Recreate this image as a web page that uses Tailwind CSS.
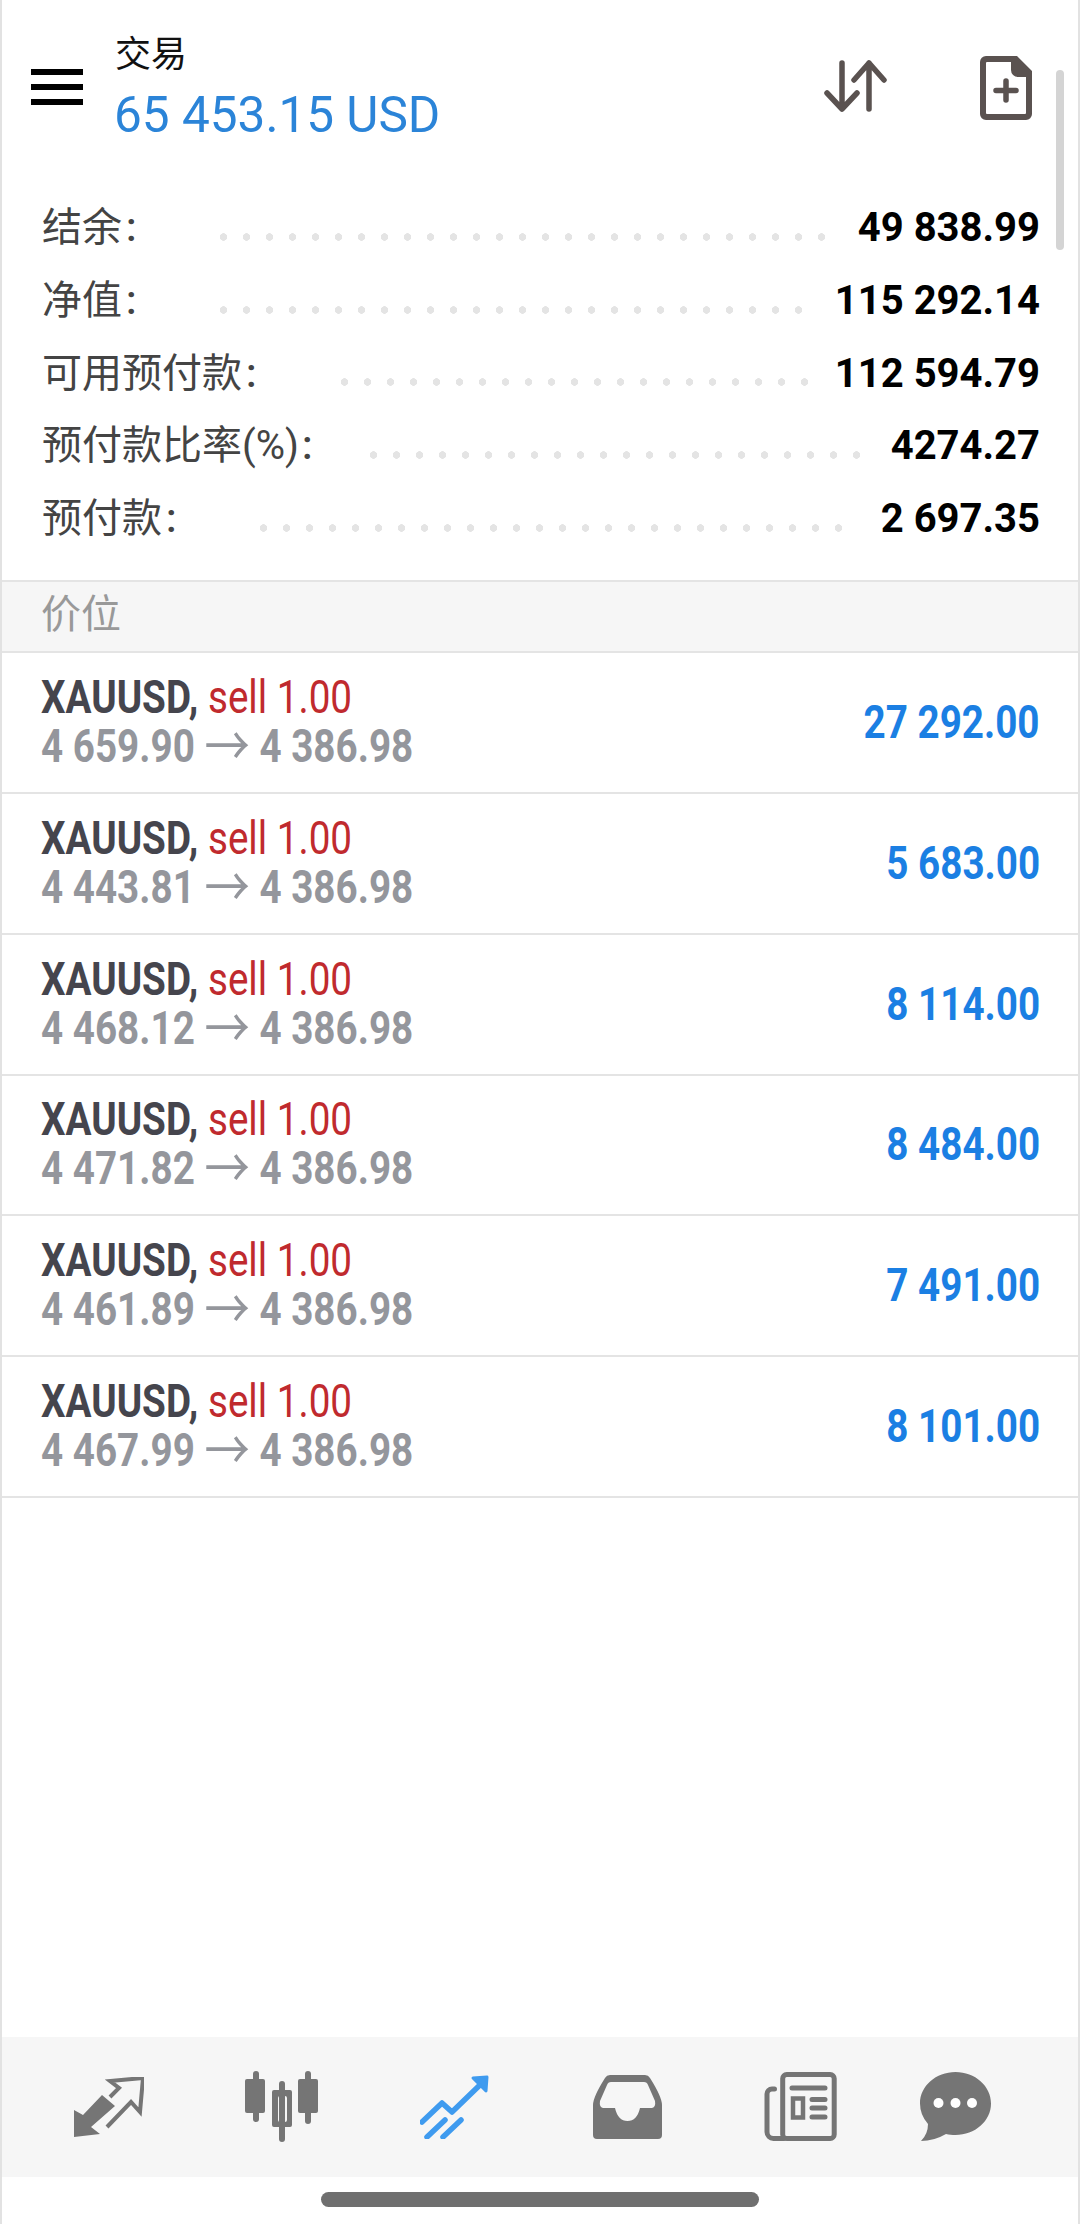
<!DOCTYPE html>
<html lang="zh">
<head>
  <meta charset="UTF-8" />
  <meta name="viewport" content="width=device-width, initial-scale=1.0" />
  <title>交易</title>
  <script src="https://cdn.jsdelivr.net/npm/@tailwindcss/browser@4"></script>
</head>
<body class="bg-white">
  <div class="relative flex flex-col h-[2224px] w-[1080px] overflow-hidden border-l-2 border-r-2 border-[#e2e2e2] font-['Roboto','Noto_Sans_CJK_SC',sans-serif]">

    <!-- Header -->
    <header class="flex items-start h-[192px] shrink-0">
      <div class="flex flex-col gap-[9px] mt-[69px] ml-[29px] w-[52px] shrink-0">
        <div class="h-[6px] bg-black"></div>
        <div class="h-[6px] bg-black"></div>
        <div class="h-[6px] bg-black"></div>
      </div>
      <div class="ml-[31px] mt-[31px]">
        <div class="text-[36px] leading-[48px] text-[#111] pl-[1px]">交易</div>
        <div class="text-[49.500px] leading-[72px] text-[#2b84d8]">65 453.15 USD</div>
      </div>
      <div class="ml-auto mt-[56px] flex gap-[92px] mr-[46px]">
        <svg width="64" height="52" viewBox="0 0 64 52" class="mt-[4px]" fill="none" stroke="#5a5250" stroke-width="5.5" stroke-linecap="round" stroke-linejoin="round">
          <path d="M18 3V49M3 33L18 49L33 33" />
          <path d="M45 49V3M30 20L45 3L60 20" />
        </svg>
        <svg width="52" height="64" viewBox="0 0 52 64">
          <path fill="#5a5250" fill-rule="evenodd" d="M6 0H37L52 15V58a6 6 0 0 1-6 6H6a6 6 0 0 1-6-6V6a6 6 0 0 1 6-6ZM7 6a1 1 0 0 0-1 1V57a1 1 0 0 0 1 1H45a1 1 0 0 0 1-1V21H38a7 7 0 0 1-7-7V6Z" />
          <path d="M26 25V44M16 34.500H36" stroke="#5a5250" stroke-width="5.500" stroke-linecap="round" />
        </svg>
      </div>
    </header>

    <!-- Account summary -->
    <section id="summary" class="shrink-0"></section>

    <!-- Positions -->
    <div class="mt-[25px] h-[73px] shrink-0 bg-[#f6f6f6] border-y-2 border-[#e4e4e4] pl-[39px] pb-[4px] flex items-center text-[40px] text-[#999]">价位</div>
    <section id="positions" class="shrink-0"></section>

    <div class="flex-1"></div>

    <!-- Bottom nav -->
    <nav class="relative h-[140px] shrink-0 bg-[#f6f6f6] flex items-center pl-[72px]">
      <svg width="70" height="60" viewBox="0 0 70 60" class="mt-[-1px]">
        <path fill="#757575" d="M0 33V60L26 57L17 50L41 29L28 18L9 38Z" />
        <path fill="none" stroke="#757575" stroke-width="4" d="M36 20L45 11L36 4L69 1L66 35L57 25L33 50" />
      </svg>
      <svg width="73" height="71" viewBox="0 0 73 71" fill="#757575" class="mt-[-1px] ml-[101px]">
        <rect x="8" y="0" width="6" height="51" rx="3" />
        <rect x="0" y="8" width="20" height="34" rx="2" />
        <rect x="34" y="10" width="6" height="61" rx="3" />
        <path fill-rule="evenodd" d="M29 19H45a2 2 0 0 1 2 2V54a2 2 0 0 1-2 2H29a2 2 0 0 1-2-2V21a2 2 0 0 1 2-2ZM35 25a2 2 0 0 0-2 2V49a2 2 0 0 0 2 2H40a2 2 0 0 0 2-2V27a2 2 0 0 0-2-2Z" />
        <rect x="60" y="0" width="6" height="53" rx="3" />
        <rect x="53" y="8" width="20" height="34" rx="2" />
      </svg>
      <svg width="69" height="64" viewBox="0 0 69 64" fill="none" stroke="#3f9bef" stroke-width="5.500" stroke-linecap="round" stroke-linejoin="round" class="mt-[-1px] ml-[102px]">
        <path d="M2 47L22 28L32 37L62 8" />
        <path fill="#3f9bef" stroke-width="3" d="M53 3L67 2L66 16Z" />
        <path d="M7 62L25 45M23 62L41 45" />
      </svg>
      <svg width="69" height="64" viewBox="0 0 69 64" class="mt-[-1px] ml-[104px]">
        <path fill="#757575" fill-rule="evenodd" d="M17 0H52a6 6 0 0 1 5 3Q69 22 69 30V60a4 4 0 0 1-4 4H4a4 4 0 0 1-4-4V30Q0 22 12 3a6 6 0 0 1 5-3ZM18 7Q15 7 14 10L7 26Q6 32 10 33H22Q25 46 34.500 46Q44 46 47 33H59Q63 32 62 26L55 10Q54 7 51 7Z" />
      </svg>
      <svg width="73" height="70" viewBox="0 0 73 70" fill="none" stroke="#757575" stroke-width="5" stroke-linecap="round" class="mt-[-1px] ml-[102px]">
        <rect x="18.700" y="2.500" width="51.500" height="64" rx="4" />
        <path d="M10.500 17H8a5 5 0 0 0-5 5V60a6.500 6.500 0 0 0 6.500 6.500H20" />
        <path d="M28 16H61M48 27.500H61M48 36H61M48 45H61" />
        <rect x="29" y="26.500" width="10" height="19" stroke-width="4.500" stroke-linecap="butt" />
      </svg>
      <svg width="71" height="70" viewBox="0 0 71 70" class="mt-[-1px] ml-[83px]">
        <path fill="#757575" d="M35.500 0C55 0 71 14 71 31.500S55 63 35.500 63C32 63 29 62.600 26 62Q14 69 1 69Q8 62 8 52Q0 43 0 31.500C0 14 16 0 35.500 0Z" />
        <circle cx="18.500" cy="31" r="5" fill="#fff" />
        <circle cx="35.500" cy="31" r="5" fill="#fff" />
        <circle cx="52" cy="31" r="5" fill="#fff" />
      </svg>
    </nav>

    <!-- Gesture bar -->
    <div class="h-[47px] shrink-0 pt-[15px] pl-[319px]">
      <div class="h-[15px] w-[438px] rounded-full bg-[#6f6f6f]"></div>
    </div>

    <!-- Scrollbar -->
    <div class="absolute left-[1054px] top-[70px] h-[180px] w-[8px] rounded-full bg-[#d4d4d4]"></div>
  </div>

  <script>
    // Account rows: label box width and leader width differ per row, so the dots land where they should
    const summaryData = [
      { name: '结余', colon: 'ml-[4px]', value: '49 838.99', labelWidth: 'w-[170px]', dots: 'w-[621px]' },
      { name: '净值', colon: 'ml-[4px]', value: '115 292.14', labelWidth: 'w-[170px]', dots: 'w-[598px]' },
      { name: '可用预付款', colon: 'ml-[4px]', value: '112 594.79', labelWidth: 'w-[291px]', dots: 'w-[483px]' },
      { name: '预付款比率(%)', colon: 'ml-[3px]', value: '4274.27', labelWidth: 'w-[320px]', dots: 'w-[506px]' },
      { name: '预付款', colon: 'ml-[4px]', value: '2 697.35', labelWidth: 'w-[210px]', dots: 'w-[598px]' }
    ];

    const positionData = [
      { open: '4 659.90', profit: '27 292.00' },
      { open: '4 443.81', profit: '5 683.00' },
      { open: '4 468.12', profit: '8 114.00' },
      { open: '4 471.82', profit: '8 484.00' },
      { open: '4 461.89', profit: '7 491.00' },
      { open: '4 467.99', profit: '8 101.00' }
    ];

    function renderSummaryRow(row) {
      return `
        <div class="flex items-center h-[72.700px] pl-[40px] pr-[38px]">
          <span class="${row.labelWidth} shrink-0 text-[40px] text-[#444] whitespace-nowrap">${row.name}<span class="${row.colon} font-medium">:</span></span>
          <span class="${row.dots} shrink-0 h-[8px] mt-[17px] bg-[radial-gradient(circle,#e4e4e4_3.500px,transparent_4px)] bg-[length:23px_8px] bg-repeat-x"></span>
          <span class="ml-auto text-[40px] font-bold text-black whitespace-nowrap">${row.value}</span>
        </div>
      `;
    }

    function renderPositionRow(pos) {
      return `
        <div class="flex items-center justify-between h-[140.700px] pl-[39px] pr-[38px] border-b-2 border-[#e4e4e4]">
          <div class="origin-left scale-x-[0.84] text-[46px] pb-[2px] whitespace-nowrap">
            <div class="leading-[49px]"><span class="font-bold text-[#45454d]">XAUUSD,</span> <span class="text-[#c02a2e]">sell 1.00</span></div>
            <div class="leading-[48px] font-bold text-[#94969c]">${pos.open} <span class="relative top-[4px] font-normal text-[54px] leading-[0]">→</span> 4 386.98</div>
          </div>
          <div class="origin-right scale-x-[0.84] text-[46px] font-bold text-[#1b7fe3] whitespace-nowrap">${pos.profit}</div>
        </div>
      `;
    }

    document.getElementById('summary').innerHTML = summaryData.map(renderSummaryRow).join('');
    document.getElementById('positions').innerHTML = positionData.map(renderPositionRow).join('');
  </script>
</body>
</html>
